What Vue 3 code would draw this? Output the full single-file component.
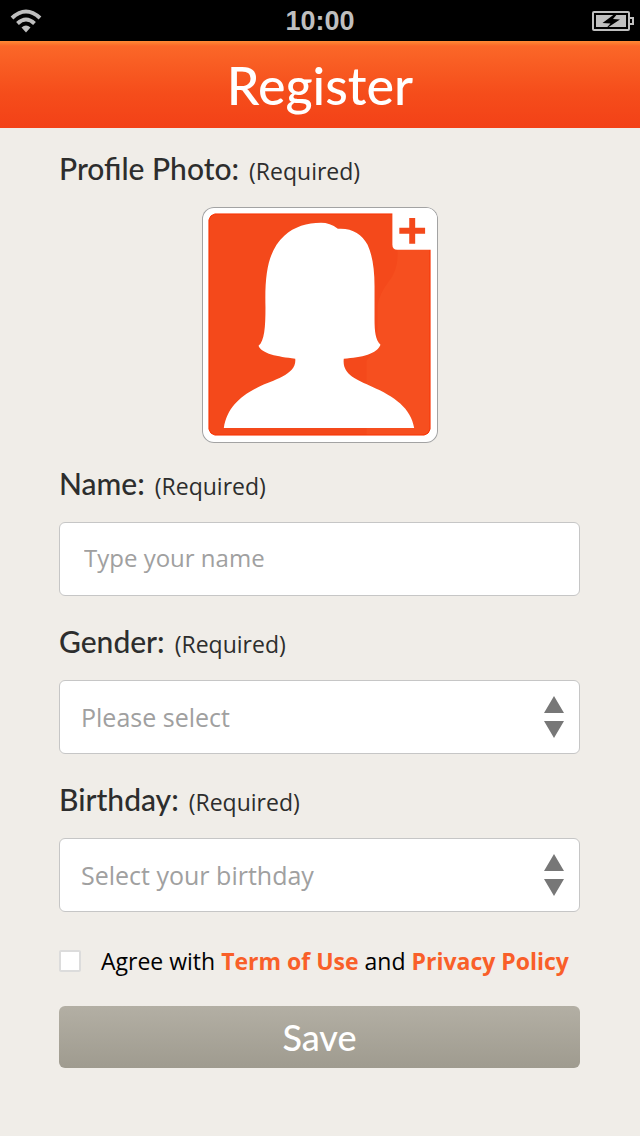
<script setup>
import { ref } from 'vue'

const name = ref('')
const gender = ref('')
const birthday = ref('')
const agreed = ref(false)
</script>

<template>
  <div class="screen">
    <div class="status">
      <svg class="wifi" viewBox="0 0 32 24" aria-label="Wi-Fi">
        <path d="M2 9 Q16 -4 30 9" />
        <path d="M7.500 14.500 Q16 6.500 24.500 14.500" />
        <path class="dot" d="M11.500 18.500 Q16 14.500 20.500 18.500 L16 23.500 Z" />
      </svg>
      <span class="time">10:00</span>
      <svg class="battery" viewBox="0 0 42 20" aria-label="Battery charging">
        <rect class="case" x="1" y="1" width="36" height="18" rx="1" />
        <path class="case" d="M38 7 H41 V13 H38" />
        <rect class="charge" x="4" y="4" width="30" height="12" />
        <path class="gap" d="M24 2 L10.500 12 L18.500 12.500 L13.500 18 L28 8.500 L21 8 L26 2 Z" />
      </svg>
    </div>

    <header class="bar"><h1>Register</h1></header>

    <form class="form" @submit.prevent>
      <div class="label">
        <label for="photo">Profile Photo:</label> <small>(Required)</small>
      </div>
      <button id="photo" class="photo" type="button" aria-label="Add profile photo">
        <svg viewBox="0 0 236 236">
          <path class="fill" d="M12 6 H229 V223 Q228 228 223 229 H12 Q7 228 6 223 V12 Q7 7 12 6 Z" />
          <path class="shade" d="M196 42 Q198 62 186 76 Q178 87 176 98 V139 L165 154 V229 H223 Q228 228 229 223 V42 Z" />
          <path class="edge" d="M12 6 H229 V223 Q228 228 223 229 H12 Q7 228 6 223 V12 Q7 7 12 6 Z" />
          <path class="white" d="M63 100 C62 62 67 42 82 28 C92 19 105 15 119 15 Q128 15 136 21 C150 20 160 26 166 37 C171 48 173 62 173 79 V112 C173 125 174 133 179 138 C176 147 160 151 142 152 C140 168 155 173 170 180 C193 190 210 202 213 222 H21 C24 202 37 190 55 181 C72 173 95 168 93 152 C75 150 59 147 56 139 C62 134 63 120 63 100 Z" />
          <path class="white" d="M191 0 H236 V42 H196 Q191 42 191 37 Z" />
          <path class="fill" d="M208 10 H214 V20 H224 V26 H214 V36 H208 V26 H198 V20 H208 Z" />
        </svg>
      </button>

      <div class="field">
        <div class="label">
          <label for="name">Name:</label> <small>(Required)</small>
        </div>
        <input id="name" v-model="name" class="box" type="text" placeholder="Type your name" />
      </div>

      <div class="field">
        <div class="label">
          <label for="gender">Gender:</label> <small>(Required)</small>
        </div>
        <div class="picker">
          <select id="gender" v-model="gender" class="box">
            <option value="">Please select</option>
          </select>
          <svg class="arrows" viewBox="0 0 20 42" aria-hidden="true">
            <path d="M10 0 L20 17 H0 Z M0 25 H20 L10 42 Z" />
          </svg>
        </div>
      </div>

      <div class="field">
        <div class="label">
          <label for="birthday">Birthday:</label> <small>(Required)</small>
        </div>
        <div class="picker">
          <select id="birthday" v-model="birthday" class="box">
            <option value="">Select your birthday</option>
          </select>
          <svg class="arrows" viewBox="0 0 20 42" aria-hidden="true">
            <path d="M10 0 L20 17 H0 Z M0 25 H20 L10 42 Z" />
          </svg>
        </div>
      </div>

      <div class="agree">
        <input id="agree" v-model="agreed" type="checkbox" />
        <label for="agree">Agree with <a href="#terms">Term of Use</a> and <a href="#privacy">Privacy Policy</a></label>
      </div>

      <button class="save" type="submit">Save</button>
    </form>
  </div>
</template>

<style>
body {
  background: #f0ede8;
}
</style>

<style scoped>
* {
  box-sizing: border-box;
}
.screen {
  min-height: 100vh;
  background: #f0ede8;
  color: #2d2d2d;
  font-family: "Open Sans", "Noto Sans", sans-serif;
}
.status {
  display: grid;
  grid-template-columns: 1fr auto 1fr;
  align-items: center;
  height: 41px;
  padding: 0 6px;
  background: #000;
  color: #bfbfbf;
}
.wifi {
  width: 32px;
  height: 24px;
  margin-left: 4px;
  fill: none;
  stroke: #bfbfbf;
  stroke-width: 4;
}
.wifi .dot {
  fill: #bfbfbf;
  stroke: none;
}
.time {
  font: bold 27px/40px "Liberation Sans", Arial, sans-serif;
}
.battery {
  justify-self: end;
  width: 42px;
  height: 20px;
}
.case {
  fill: none;
  stroke: #bfbfbf;
  stroke-width: 2;
}
.charge {
  fill: #bfbfbf;
}
.gap {
  fill: #000;
}
.bar {
  height: 87px;
  background: linear-gradient(#ff8a35 0, #fb6728 5px, #f54d1b 60%, #f34117 100%);
}
.bar h1 {
  margin: 0;
  color: #fff;
  font: 500 52px/88px Lato, "Open Sans", sans-serif;
  text-align: center;
}
.form {
  padding: 22px 60px 68px 59px;
}
.label {
  display: flex;
  align-items: baseline;
  gap: 10px;
  height: 36px;
  margin-bottom: 21px;
}
.label label {
  font: 500 30px/36px Lato, "Open Sans", sans-serif;
}
.label small {
  font-size: 23px;
  line-height: 36px;
}
.photo {
  display: block;
  width: 236px;
  height: 236px;
  margin: 0 auto 22px;
  padding: 0;
  border: 0;
  border-radius: 12px;
  background: #fff;
  box-shadow: inset 0 0 0 1px #a3a3a3;
}
.photo svg {
  display: block;
  width: 234px;
  height: 234px;
  margin: 1px;
  border-radius: 11px;
}
.fill {
  fill: #f4491b;
}
.shade {
  fill: #f64f1f;
}
.edge {
  fill: none;
  stroke: #fa3200;
  stroke-width: 1;
}
.white {
  fill: #fff;
}
.field {
  margin-bottom: 27px;
}
.box {
  display: block;
  width: 100%;
  height: 74px;
  padding: 0 24px;
  border: 1px solid #c6c6c6;
  border-radius: 6px;
  background: #fff;
  color: #a0a0a0;
  font: 24px/32px "Open Sans", "Noto Sans", sans-serif;
  appearance: none;
}
input.box {
  padding-bottom: 4px;
}
select.box {
  padding: 0 21px;
  font-size: 25px;
}
.box::placeholder {
  color: #a0a0a0;
  opacity: 1;
}
.picker {
  position: relative;
}
.arrows {
  position: absolute;
  top: 16px;
  right: 16px;
  width: 20px;
  height: 42px;
  fill: #777;
  pointer-events: none;
}
.agree {
  display: flex;
  align-items: center;
  gap: 20px;
  height: 44px;
  margin-bottom: 23px;
  color: #000;
  font-size: 23px;
  line-height: 32px;
  white-space: nowrap;
}
.agree input {
  flex: none;
  width: 22px;
  height: 22px;
  margin: 0;
  border: 2px solid #dcdcdc;
  border-radius: 2px;
  background: #fff;
  appearance: none;
}
.agree input:checked {
  background: #f95f29;
}
.agree a {
  color: #f95f29;
  font-weight: 700;
  text-decoration: none;
}
.save {
  display: block;
  width: 100%;
  height: 62px;
  padding: 0;
  border: 0;
  border-radius: 6px;
  background: linear-gradient(#b3afa4, #9f9b8f);
  color: #fff;
  font: 500 36px/62px Lato, "Open Sans", sans-serif;
}
</style>
